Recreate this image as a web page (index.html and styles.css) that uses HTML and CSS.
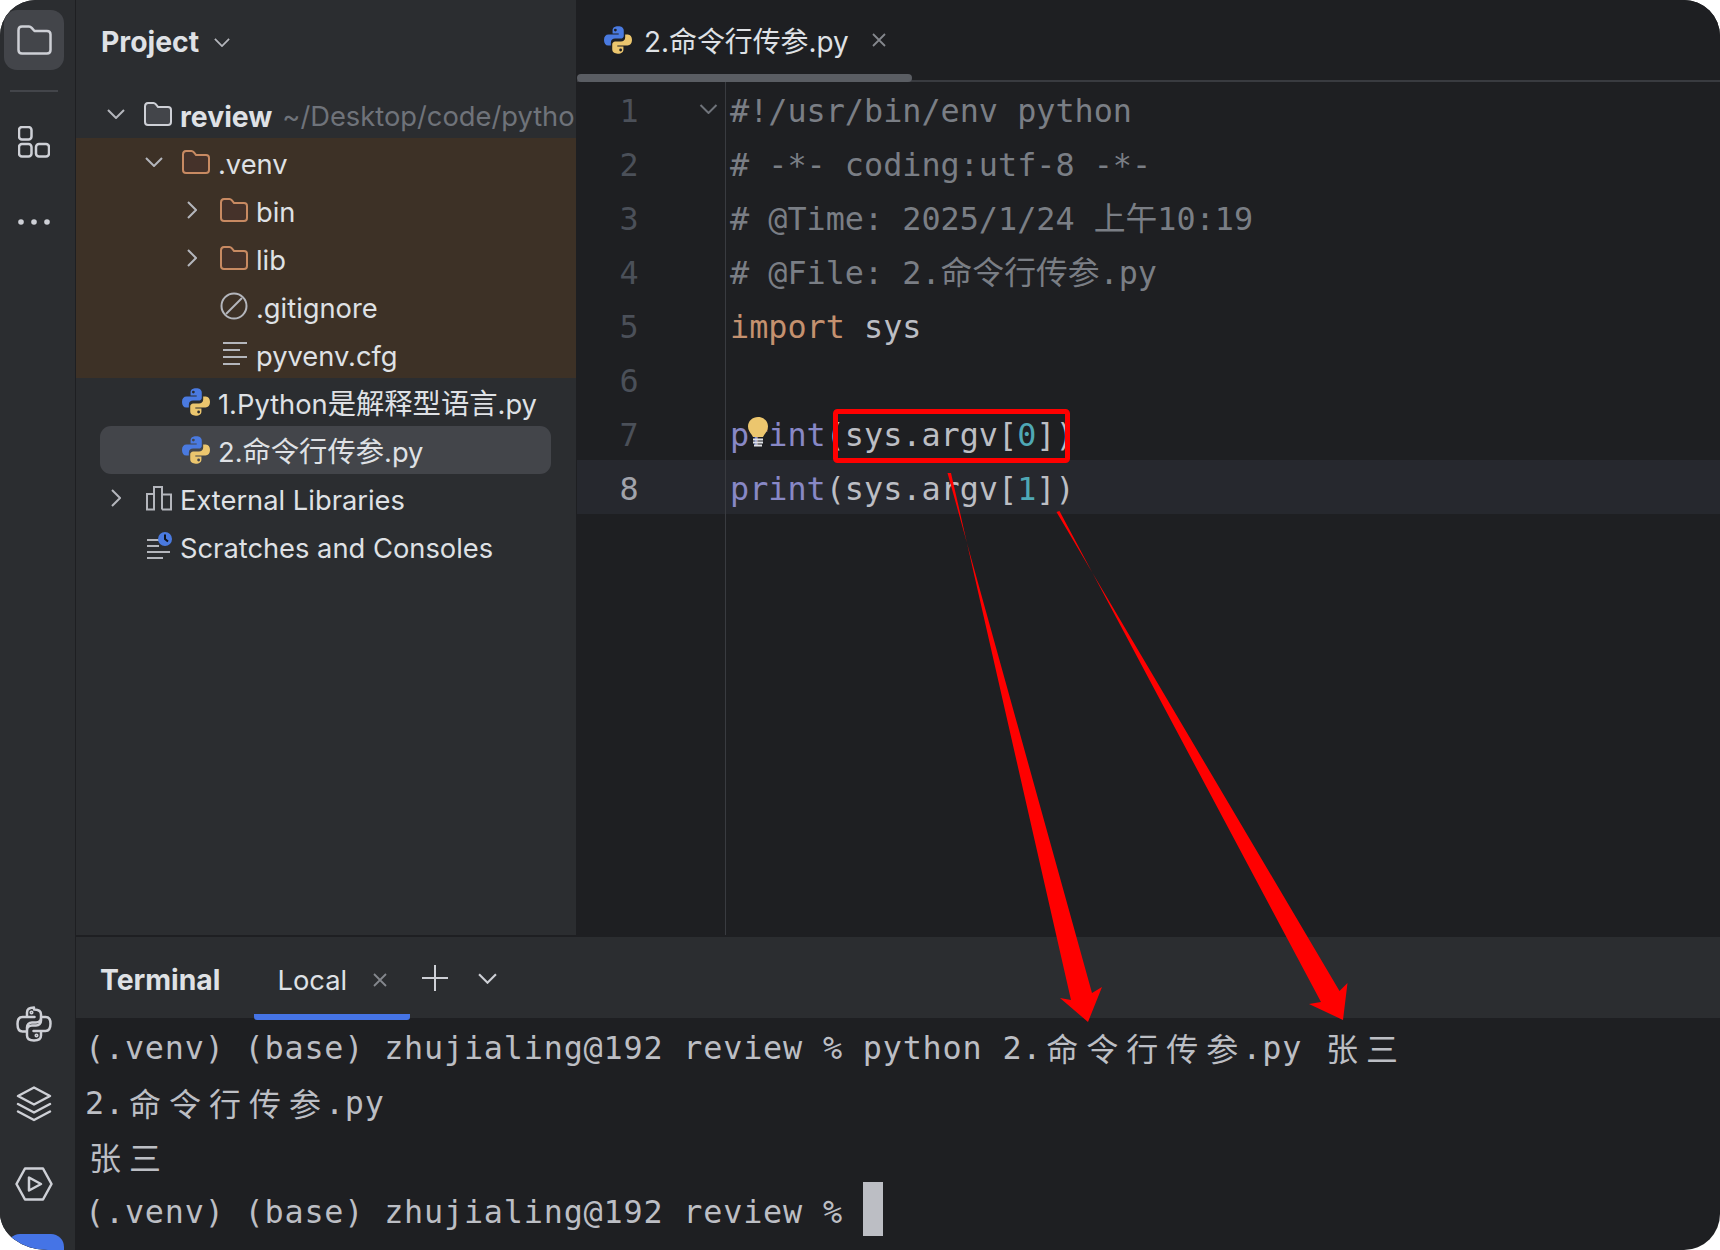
FILE: index.html
```html
<!DOCTYPE html>
<html lang="zh">
<head>
<meta charset="utf-8">
<title>2.命令行传参.py</title>
<link rel="stylesheet" href="styles.css">
</head>
<body>
<svg class="defs" width="0" height="0" aria-hidden="true">
  <symbol id="py" viewBox="0 0 16 16">
    <path fill="#4a7ae0" fill-rule="evenodd" d="M8.2.2C5.9.2 4.9 1.1 4.9 2.6v1.7h3.5v.6H2.6C1 4.9 0 6 0 8c0 2 .9 3.2 2.4 3.2h1.5V9.5C3.900 8.100 5 7.200 6.300 7.200h3.300c1 0 1.700-.8 1.700-1.700V2.700C11.300 1 9.900.2 8.200.2zM6.500 1.500a.8.8 0 1 1 0 1.600.8.8 0 0 1 0-1.600z"/>
    <path fill="#ecc66e" fill-rule="evenodd" transform="rotate(180 8 8)" d="M8.200.2C5.900.2 4.900 1.100 4.900 2.600v1.700h3.500v.6H2.600C1 4.900 0 6 0 8c0 2 .9 3.200 2.400 3.200h1.500V9.500C3.900 8.100 5 7.200 6.300 7.200h3.300c1 0 1.700-.8 1.700-1.700V2.700C11.300 1 9.900.2 8.200.2zM6.500 1.500a.8.8 0 1 1 0 1.600.8.8 0 0 1 0-1.600z"/>
  </symbol>
  <symbol id="folder" viewBox="0 0 28 24">
    <path d="M1 4.500C1 2.500 2.300 1 4 1h5.500c1 0 1.600.5 2.200 1.200L14 5h10c1.700 0 3 1.200 3 3v12c0 1.800-1.300 3-3 3H4c-1.700 0-3-1.200-3-3z"/>
  </symbol>
  <symbol id="chev-down" viewBox="0 0 18 10"><path d="M1 1l8 8 8-8"/></symbol>
  <symbol id="chev-right" viewBox="0 0 10 18"><path d="M1 1l8 8-8 8"/></symbol>
  <symbol id="close" viewBox="0 0 14 14"><path d="M1 1l12 12M13 1L1 13"/></symbol>
</svg>

<div class="window">
  <nav class="rail">
    <div class="rail-top">
      <button class="rail-btn active">
        <svg class="ico-35" viewBox="0 0 35 30"><path d="M1.500 5C1.500 2.800 3 1.500 5 1.500h7c1.200 0 1.900.5 2.700 1.400L17.500 6H30c2.200 0 3.500 1.400 3.500 3.500V25c0 2.100-1.300 3.500-3.500 3.500H5c-2 0-3.500-1.400-3.500-3.500z"/></svg>
      </button>
      <div class="rail-sep"></div>
      <button class="rail-btn tool">
        <svg class="ico-32" viewBox="0 0 32 32"><rect x="1" y="1" width="12.500" height="12.500" rx="3"/><rect x="1" y="18" width="12.500" height="12.500" rx="3"/><rect x="18" y="18" width="13" height="12.500" rx="3"/></svg>
      </button>
      <button class="rail-btn more">
        <svg class="ico-dots" viewBox="0 0 32 6"><circle cx="3" cy="3" r="2.800"/><circle cx="16" cy="3" r="2.800"/><circle cx="29" cy="3" r="2.800"/></svg>
      </button>
    </div>
    <div class="rail-bottom">
      <button class="rail-btn">
        <svg class="ico-36" viewBox="0 0 36 36"><path d="M18 1.500c-4.500 0-7 1.800-7 5V11h7.500M18 34.500c4.500 0 7-1.800 7-5V25h-7.500M11 11H6.500C3 11 1.500 14 1.500 18s1.500 7.500 5 7.500H11v-4c0-3 2-5 5-5h4c3 0 5-2 5-5v-3c0-3.200-2.500-5-7-5M25 25h4.500c3.500 0 5-3.500 5-7.500S33 11 29.500 11H25v3.500c0 3-2 5-5 5h-4c-3 0-5 2-5 5v5c0 3.200 2.500 5 7 5"/><circle cx="15.500" cy="6.500" r=".8"/><circle cx="20.500" cy="29.500" r=".8"/></svg>
      </button>
      <button class="rail-btn">
        <svg class="ico-36" viewBox="0 0 36 36"><path d="M18 1.500L34 10l-16 8.500L2 10z"/><path d="M2 18l16 8.500L34 18"/><path d="M2 25.500L18 34l16-8.500"/></svg>
      </button>
      <button class="rail-btn">
        <svg class="ico-38" viewBox="0 0 38 34"><path d="M10 1.500h18L36.500 17 28 32.500H10L1.500 17z"/><path d="M14 10.500v13L26 17z"/></svg>
      </button>
      <div class="rail-blue"></div>
    </div>
  </nav>

  <div class="workspace">
    <div class="upper">
      <aside class="project">
        <header class="project-head">
          <span class="project-title">Project</span>
          <svg class="chev-sm"><use href="#chev-down"/></svg>
        </header>
        <div class="tree">
          <div class="row d0">
            <svg class="chev"><use href="#chev-down"/></svg>
            <svg class="folder root"><use href="#folder"/></svg>
            <span class="name strong">review</span><span class="name path">~/Desktop/code/python</span>
          </div>
          <div class="excluded">
            <div class="row d1">
              <svg class="chev"><use href="#chev-down"/></svg>
              <svg class="folder orange"><use href="#folder"/></svg>
              <span class="name">.venv</span>
            </div>
            <div class="row d2">
              <svg class="chev right"><use href="#chev-right"/></svg>
              <svg class="folder orange"><use href="#folder"/></svg>
              <span class="name">bin</span>
            </div>
            <div class="row d2">
              <svg class="chev right"><use href="#chev-right"/></svg>
              <svg class="folder orange"><use href="#folder"/></svg>
              <span class="name">lib</span>
            </div>
            <div class="row d2">
              <span class="chev"></span>
              <svg class="file-ico" viewBox="0 0 28 28"><circle cx="14" cy="14" r="12.500"/><path d="M6 22L22 6"/></svg>
              <span class="name">.gitignore</span>
            </div>
            <div class="row d2">
              <span class="chev"></span>
              <svg class="file-ico" viewBox="0 0 28 28"><path d="M3 3h24M3 10h17M3 17h24M3 24h17"/></svg>
              <span class="name">pyvenv.cfg</span>
            </div>
          </div>
          <div class="row d1">
            <span class="chev"></span>
            <svg class="py"><use href="#py"/></svg>
            <span class="name has-zh">1.Python<span class="zh">是解释型语言</span>.py</span>
          </div>
          <div class="row d1 selected">
            <span class="chev"></span>
            <svg class="py"><use href="#py"/></svg>
            <span class="name has-zh">2.<span class="zh">命令行传参</span>.py</span>
          </div>
          <div class="row d0">
            <svg class="chev right"><use href="#chev-right"/></svg>
            <svg class="file-ico" viewBox="0 0 28 28"><path d="M3 10h7v15.500H3zM10 25.500V3h8v22.500M18 10.500h9v15h-9"/></svg>
            <span class="name">External Libraries</span>
          </div>
          <div class="row d0">
            <span class="chev"></span>
            <svg class="file-ico scratch" viewBox="0 0 28 28"><path d="M3 8h12M3 14h12M3 20h23M3 26h16"/><circle class="clock" cx="21" cy="7" r="7"/><path class="hand" d="M21 2.500v4.500l3 2.500"/></svg>
            <span class="name">Scratches and Consoles</span>
          </div>
        </div>
      </aside>

      <main class="editor">
        <div class="tabs">
          <div class="tab">
            <svg class="py"><use href="#py"/></svg>
            <span class="tab-name">2.命令行传参.py</span>
            <svg class="x"><use href="#close"/></svg>
          </div>
          <div class="tab-scroll"><div class="tab-thumb"></div></div>
        </div>
        <div class="lines">
          <div class="line"><div class="num"><span class="digit">1</span><svg class="fold"><use href="#chev-down"/></svg></div><div class="code c-com">#!/usr/bin/env python</div></div>
          <div class="line"><div class="num"><span class="digit">2</span></div><div class="code c-com"># -*- coding:utf-8 -*-</div></div>
          <div class="line"><div class="num"><span class="digit">3</span></div><div class="code c-com"># @Time: 2025/1/24 上午10:19</div></div>
          <div class="line"><div class="num"><span class="digit">4</span></div><div class="code c-com"># @File: 2.命令行传参.py</div></div>
          <div class="line"><div class="num"><span class="digit">5</span></div><div class="code"><span class="c-key">import</span> sys</div></div>
          <div class="line"><div class="num"><span class="digit">6</span></div><div class="code"></div></div>
          <div class="line"><div class="num"><span class="digit">7</span></div><div class="code"><span class="c-fn">print</span>(sys.argv[<span class="c-num">0</span>])<svg class="bulb" viewBox="0 0 20 30"><path class="bulb-top" d="M10 0C4.500 0 0 4 0 9.500c0 3.500 2 5.800 3.700 8.200L5 20h10l1.300-2.300C18 15.300 20 13 20 9.500 20 4 15.500 0 10 0z"/><path class="bulb-base" d="M5 22.500h10M5 25.500h10M6 28.500h8"/></svg></div></div>
          <div class="line current"><div class="num"><span class="digit">8</span></div><div class="code"><span class="c-fn">print</span>(sys.argv[<span class="c-num">1</span>])</div></div>
          <div class="gutter-fill"></div>
        </div>
      </main>
    </div>

    <section class="terminal">
      <header class="term-head">
        <span class="term-title">Terminal</span>
        <div class="term-tab">
          <span>Local</span>
          <svg class="x"><use href="#close"/></svg>
        </div>
        <svg class="plus" viewBox="0 0 26 26"><path d="M13 0v26M0 13h26"/></svg>
        <svg class="chev-term"><use href="#chev-down"/></svg>
      </header>
      <div class="term-body">
        <div class="tline">(.venv) (base) zhujialing@192 review % python 2.<span class="wide">命令行传参</span>.py <span class="wide">张三</span></div>
        <div class="tline">2.<span class="wide">命令行传参</span>.py</div>
        <div class="tline"><span class="wide">张三</span></div>
        <div class="tline">(.venv) (base) zhujialing@192 review % <span class="cursor"></span></div>
      </div>
    </section>
  </div>

  <svg class="marks" viewBox="0 0 1720 1250" aria-hidden="true">
    <rect class="mark-box" x="835.500" y="411.500" width="232" height="49" rx="2"/>
    <polygon class="mark" points="947.500,473 951,473 1071,1000 1060,998 1088,1022 1102,987 1092,993"/>
    <polygon class="mark" points="1056.500,512 1059.500,511 1321,1002 1309,1004 1343,1020 1347.500,983 1339.500,991"/>
  </svg>
</div>
</body>
</html>
```

FILE: styles.css
```css
* { box-sizing: border-box; }
html, body { margin: 0; padding: 0; background: #fff; }
.defs { position: absolute; }
svg { display: block; flex: none; fill: none; }

.window {
  position: relative;
  display: flex;
  width: 1720px;
  height: 1250px;
  overflow: hidden;
  border-radius: 36px 36px 36px 48px / 36px 36px 36px 37px;
  background: #1e1f22;
  color: #bcbec4;
  font-family: Inter, "Noto Sans CJK SC", sans-serif;
}

/* left rail */
.rail {
  width: 76px;
  flex: none;
  display: flex;
  flex-direction: column;
  justify-content: space-between;
  padding-right: 7px;
  background: #2b2d30;
  border-right: 1px solid #1e1f22;
}
.rail-top { display: flex; flex-direction: column; align-items: center; padding-top: 10px; }
.rail-bottom { display: flex; flex-direction: column; align-items: center; }
.rail-btn {
  width: 60px;
  height: 60px;
  flex: none;
  display: flex;
  align-items: center;
  justify-content: center;
  padding: 0;
  margin-bottom: 20px;
  border: 0;
  border-radius: 13px;
  background: transparent;
}
.rail-btn.active { background: #43454a; }
.rail-btn.tool { margin-bottom: 28px; }
.rail-btn svg { stroke: #ced0d6; stroke-width: 2.500; stroke-linejoin: round; stroke-linecap: round; }
.rail-btn.more svg { fill: #ced0d6; stroke: none; }
.rail-sep { width: 48px; height: 2px; background: #43454a; margin-bottom: 20px; }
.more { height: 44px; }
.ico-35 { width: 35px; height: 30px; }
.ico-32 { width: 32px; height: 32px; }
.ico-36 { width: 36px; height: 36px; }
.ico-38 { width: 38px; height: 34px; }
.ico-dots { width: 32px; height: 6px; }
.rail-bottom .rail-btn { height: 40px; margin-bottom: 40px; }
.rail-bottom .rail-btn:last-of-type { margin-bottom: 30px; }
.rail-blue { width: 57px; height: 16px; border-radius: 13px 13px 0 0; background: #4574e6; margin-left: 3px; }

.workspace { flex: 1; min-width: 0; display: flex; flex-direction: column; }
.upper { flex: none; height: 937px; display: flex; border-bottom: 2px solid #1e1f22; }

/* project panel */
.project { width: 500px; flex: none; margin-right: 1px; background: #2b2d30; overflow: hidden; }
.project-head { height: 90px; display: flex; align-items: flex-start; padding: 24px 0 0 25px; gap: 15px; }
.project-title { font-size: 28.300px; line-height: 36px; font-weight: 700; color: #dfe1e5; }
.chev-sm { width: 16px; height: 9px; margin-top: 14px; stroke: #b4b6bc; stroke-width: 2; }

.row {
  --ind: 31px;
  height: 48px;
  display: flex;
  align-items: center;
  padding-left: var(--ind);
  white-space: nowrap;
  font-size: 27.300px;
  color: #dfe1e5;
}
.d1 { --ind: 69px; }
.d2 { --ind: 107px; }
.chev { width: 18px; height: 10px; margin-right: 19px; stroke: #b4b6bc; stroke-width: 2; flex: none; }
.chev.right { width: 10px; height: 18px; margin-left: 4px; margin-right: 23px; }
.folder { width: 28px; height: 24px; margin-right: 8px; stroke-width: 2; }
.folder.root { fill: #43454a; stroke: #ced0d6; }
.folder.orange { fill: #45322a; stroke: #c88a62; }
.file-ico { width: 28px; height: 28px; margin-right: 8px; stroke: #b4b6bc; stroke-width: 2; }
.scratch .clock { fill: #4a7ae0; stroke: none; }
.scratch .hand { stroke: #10131a; }
.py { width: 28px; height: 28px; margin-right: 8px; }
.name { line-height: 48px; padding-top: 3px; height: 48px; }
.name.has-zh { padding-top: 2px; }
.zh { font-size: 28.300px; }
.name.strong { font-size: 28.300px; font-weight: 700; }
.path { color: #6f737a; margin-left: 10px; }
.excluded { background: #3d3126; }
.selected { margin: 0 25px 0 24px; padding-left: calc(var(--ind) - 24px); background: #43454a; border-radius: 11px; }

/* editor */
.editor { flex: 1; min-width: 0; display: flex; flex-direction: column; background: #1e1f22; }
.tabs { height: 82px; flex: none; display: flex; flex-direction: column; }
.tab { height: 74px; flex: none; display: flex; align-items: center; padding: 6px 0 0 27px; }
.tab .py { margin-right: 12px; }
.tab-name { font-size: 27.900px; line-height: 40px; padding-top: 3px; color: #dfe1e5; }
.x { width: 14px; height: 14px; stroke: #84878d; stroke-width: 1.800; }
.tab .x { margin: -1px 0 0 23px; }
.tab-scroll { height: 8px; border-bottom: 2px solid #393b40; }
.tab-thumb { width: 335px; height: 8px; border-radius: 4px; background: #5a5d63; }

.lines { flex: 1; display: flex; flex-direction: column; font-family: "DejaVu Sans Mono", "Noto Sans CJK SC", monospace; font-size: 31.800px; }
.line { height: 54px; flex: none; display: flex; align-items: flex-start; }
.line.current { background: #26282e; }
.num { width: 149px; height: 100%; flex: none; display: flex; align-items: flex-start; border-right: 1px solid #393b40; color: #4b5059; }
.digit { width: 104px; text-align: center; line-height: 58px; }
.fold { width: 19px; height: 10px; margin: 22px 0 0 18px; stroke: #6f737a; stroke-width: 2; }
.current .digit { color: #a1a3ab; }
.gutter-fill { flex: 1; width: 149px; border-right: 1px solid #393b40; }
.code { position: relative; padding-left: 4px; line-height: 58px; white-space: pre; }
.c-com { color: #7a7e85; }
.c-key { color: #c4916f; }
.c-fn { color: #8888c6; }
.c-num { color: #4fa8b5; }
.bulb { position: absolute; left: 22px; top: 11px; width: 20px; height: 30px; }
.bulb-top { fill: #ecc66e; }
.bulb-base { stroke: #dfe1e5; stroke-width: 2; }

/* terminal */
.terminal { flex: 1; min-height: 0; display: flex; flex-direction: column; }
.term-head { height: 81px; flex: none; display: flex; background: #2b2d30; align-items: center; padding: 0 0 0 24px; }
.term-title { font-size: 28.300px; font-weight: 700; padding-top: 5px; color: #dfe1e5; margin-right: 34px; }
.term-tab {
  width: 156px;
  height: 83px;
  flex: none;
  align-self: flex-start;
  display: flex;
  align-items: center;
  padding: 9px 0 0 23px;
  font-size: 27.300px;
  color: #dfe1e5;
  border-bottom: 6px solid #4574e6;
  border-radius: 0 0 3px 3px;
}
.term-tab .x { margin-left: 26px; }
.plus { width: 26px; height: 26px; margin-left: 12px; stroke: #ced0d6; stroke-width: 2; }
.chev-term { width: 19px; height: 11px; margin: 2px 0 0 30px; stroke: #ced0d6; stroke-width: 2; }
.term-body { flex: 1; padding-left: 9px; font-family: "DejaVu Sans Mono", "Noto Sans CJK SC", monospace; font-size: 31.800px; letter-spacing: 0.800px; color: #bcbec4; }
.tline { height: 54.670px; line-height: 60px; display: flex; align-items: flex-start; white-space: pre; }
.wide { font-size: 32px; letter-spacing: 8px; margin: 0 -4px 0 4px; padding-top: 2px; }
.cursor { width: 20px; height: 54px; background: #bcbec4; }

/* annotations over the screenshot */
.marks { position: absolute; left: 0; top: 0; width: 1720px; height: 1250px; pointer-events: none; }
.mark { fill: #ff0000; }
.mark-box { fill: none; stroke: #ff0000; stroke-width: 5; }
```
